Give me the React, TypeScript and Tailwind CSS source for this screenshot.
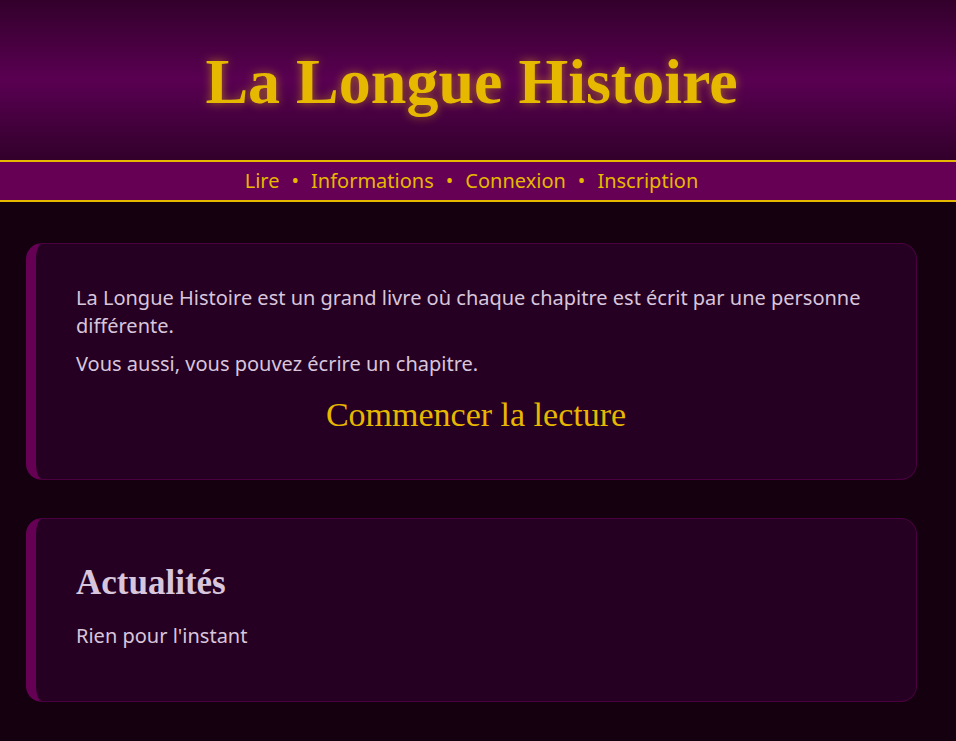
const serif = "font-['Liberation_Serif','DejaVu_Serif',serif]";

const links = ["Lire", "Informations", "Connexion", "Inscription"];

export default function App() {
  return (
    <div className="min-h-screen bg-[#14000f] font-['Noto_Sans',sans-serif] text-[#d8c6dc]">
      {/* Header */}
      <header className="h-[160px] pr-[13px] flex items-center justify-center bg-[linear-gradient(to_bottom,#32002b,#5a0052_50%,#32002b)]">
        <h1
          className={`${serif} text-[64px] font-bold text-[#e6b800] [text-shadow:0_0_10px_rgba(230,184,0,0.55)] leading-none mt-1`}
        >
          La Longue Histoire
        </h1>
      </header>

      {/* Nav */}
      <nav className="h-[42px] pr-[13px] border-y-2 border-[#e6b800] bg-[#660055] flex items-center justify-center gap-3 text-xl text-[#e6b800]">
        {links.map((l, i) => (
          <div key={l} className="flex items-center gap-3">
            {i > 0 && <span>•</span>}
            <a href="#">{l}</a>
          </div>
        ))}
      </nav>

      <main className="pt-[41px] pb-[40px] pl-[26px] pr-[39px] flex flex-col gap-[38px]">
        <section className="rounded-2xl border border-[#4a0040] border-l-[10px] border-l-[#660055] bg-[#260022] px-10 pt-10 pb-[42px] text-xl leading-7">
          <p className="mb-[10px]">
            La Longue Histoire est un grand livre où chaque chapitre est écrit par une personne
            différente.
          </p>
          <p className="mb-[14px]">Vous aussi, vous pouvez écrire un chapitre.</p>
          <p className={`${serif} text-center text-[34px] leading-[45px] text-[#e6b800]`}>
            <a href="#">Commencer la lecture</a>
          </p>
        </section>

        <section className="rounded-2xl border border-[#4a0040] border-l-[10px] border-l-[#660055] bg-[#260022] px-10 pt-10 pb-[51px] text-xl leading-7">
          <h2 className={`${serif} text-[35px] font-bold leading-[48px] mb-[15px] text-[#d8c6dc]`}>
            Actualités
          </h2>
          <p>Rien pour l'instant</p>
        </section>
      </main>
    </div>
  );
}
